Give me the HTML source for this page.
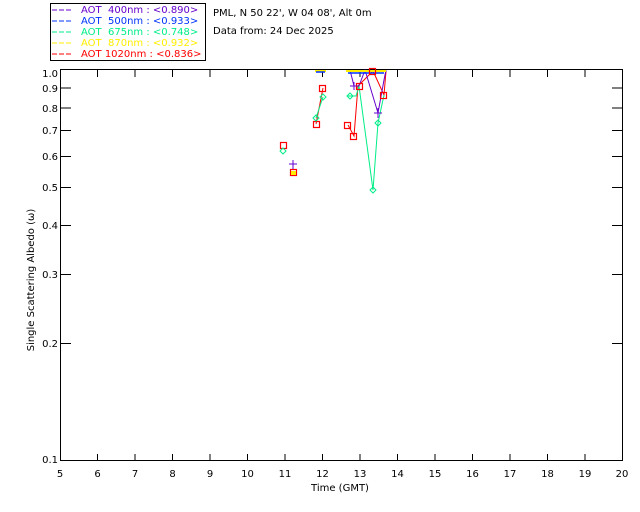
<!DOCTYPE html>
<html><head><meta charset="utf-8"><style>
html,body{margin:0;padding:0;background:#fff;width:640px;height:512px;overflow:hidden}
svg{display:block}
text{font-family:"DejaVu Sans","Liberation Sans",sans-serif;font-size:10px;white-space:pre}
</style></head><body>
<svg width="640" height="512" viewBox="0 0 640 512" xmlns="http://www.w3.org/2000/svg">
<rect x="50.5" y="3.5" width="155" height="57" fill="#fff" stroke="#000"/>
<g font-size="10">
<line x1="52" y1="10" x2="73" y2="10" stroke="#6600cc" stroke-dasharray="5,2"/>
<text x="81" y="13" fill="#6600cc" xml:space="preserve">AOT  400nm : &lt;0.890&gt;</text>
<line x1="52" y1="21" x2="73" y2="21" stroke="#0033ff" stroke-dasharray="5,2"/>
<text x="81" y="24" fill="#0033ff" xml:space="preserve">AOT  500nm : &lt;0.933&gt;</text>
<line x1="52" y1="32" x2="73" y2="32" stroke="#00ee88" stroke-dasharray="5,2"/>
<text x="81" y="35" fill="#00ee88" xml:space="preserve">AOT  675nm : &lt;0.748&gt;</text>
<line x1="52" y1="43" x2="73" y2="43" stroke="#ffee00" stroke-dasharray="5,2"/>
<text x="81" y="46" fill="#ffee00" xml:space="preserve">AOT  870nm : &lt;0.932&gt;</text>
<line x1="52" y1="54" x2="73" y2="54" stroke="#ff0000" stroke-dasharray="5,2"/>
<text x="81" y="57" fill="#ff0000" xml:space="preserve">AOT 1020nm : &lt;0.836&gt;</text>
</g>
<text x="213" y="16">PML, N 50 22', W 04 08', Alt 0m</text>
<text x="213" y="34">Data from: 24 Dec 2025</text>

<g stroke="#000" stroke-width="1" fill="none">
<rect x="60.5" y="69.5" width="562" height="391"/>
</g>
<g stroke="#000">
<line x1="97.5" y1="461" x2="97.5" y2="454"/><line x1="135" y1="461" x2="135" y2="454"/><line x1="172.5" y1="461" x2="172.5" y2="454"/><line x1="210" y1="461" x2="210" y2="454"/><line x1="247.5" y1="461" x2="247.5" y2="454"/><line x1="285" y1="461" x2="285" y2="454"/><line x1="322.5" y1="461" x2="322.5" y2="454"/><line x1="360" y1="461" x2="360" y2="454"/><line x1="397.5" y1="461" x2="397.5" y2="454"/><line x1="435" y1="461" x2="435" y2="454"/><line x1="472.5" y1="461" x2="472.5" y2="454"/><line x1="510" y1="461" x2="510" y2="454"/><line x1="547.5" y1="461" x2="547.5" y2="454"/><line x1="585" y1="461" x2="585" y2="454"/>
<line x1="97.5" y1="70" x2="97.5" y2="77"/><line x1="135" y1="70" x2="135" y2="77"/><line x1="172.5" y1="70" x2="172.5" y2="77"/><line x1="210" y1="70" x2="210" y2="77"/><line x1="247.5" y1="70" x2="247.5" y2="77"/><line x1="285" y1="70" x2="285" y2="77"/><line x1="322.5" y1="70" x2="322.5" y2="77"/><line x1="360" y1="70" x2="360" y2="77"/><line x1="397.5" y1="70" x2="397.5" y2="77"/><line x1="435" y1="70" x2="435" y2="77"/><line x1="472.5" y1="70" x2="472.5" y2="77"/><line x1="510" y1="70" x2="510" y2="77"/><line x1="547.5" y1="70" x2="547.5" y2="77"/><line x1="585" y1="70" x2="585" y2="77"/>
<line x1="60" y1="88" x2="71" y2="88"/><line x1="60" y1="108" x2="71" y2="108"/><line x1="60" y1="130.5" x2="71" y2="130.5"/><line x1="60" y1="156.5" x2="71" y2="156.5"/><line x1="60" y1="187.5" x2="71" y2="187.5"/><line x1="60" y1="225.5" x2="71" y2="225.5"/><line x1="60" y1="274.5" x2="71" y2="274.5"/><line x1="60" y1="343.5" x2="71" y2="343.5"/>
<line x1="612" y1="88" x2="622" y2="88"/><line x1="612" y1="108" x2="622" y2="108"/><line x1="612" y1="130.5" x2="622" y2="130.5"/><line x1="612" y1="156.5" x2="622" y2="156.5"/><line x1="612" y1="187.5" x2="622" y2="187.5"/><line x1="612" y1="225.5" x2="622" y2="225.5"/><line x1="612" y1="274.5" x2="622" y2="274.5"/><line x1="612" y1="343.5" x2="622" y2="343.5"/>
</g>
<g text-anchor="end">
<text x="58" y="77">1.0</text><text x="58" y="92">0.9</text><text x="58" y="112">0.8</text><text x="58" y="134">0.7</text><text x="58" y="160">0.6</text><text x="58" y="191">0.5</text><text x="58" y="229">0.4</text><text x="58" y="278">0.3</text><text x="58" y="347">0.2</text><text x="58" y="463">0.1</text>
</g>
<g text-anchor="middle">
<text x="60" y="477">5</text><text x="97.5" y="477">6</text><text x="135" y="477">7</text><text x="172.5" y="477">8</text><text x="210" y="477">9</text><text x="247.5" y="477">10</text><text x="285" y="477">11</text><text x="322.5" y="477">12</text><text x="360" y="477">13</text><text x="397.5" y="477">14</text><text x="435" y="477">15</text><text x="472.5" y="477">16</text><text x="510" y="477">17</text><text x="547.5" y="477">18</text><text x="585" y="477">19</text><text x="622" y="477">20</text>
<text x="340" y="491">Time (GMT)</text>
</g>
<text transform="translate(34,280) rotate(-90)" text-anchor="middle">Single Scattering Albedo (ω)</text>

<g fill="none">
<polyline points="316,124 323,88" stroke="#ff0000"/>
<polyline points="316,118 323,97" stroke="#00ee88"/>
<polyline points="348,125 354,136 358,86 373,71 384,95 386,71" stroke="#ff0000"/>
<polyline points="348,96 356,96 359,86 373,190 378,123 384,95" stroke="#00ee88"/>
<polyline points="350,70 354,86 359,86 365,70 378,113 384,80 386,70" stroke="#6600cc"/>
</g>
<g stroke="#ffee00" stroke-width="2"><line x1="315" y1="71" x2="326" y2="71"/><line x1="346" y1="71" x2="386" y2="71"/></g>
<g stroke="#0033ff" stroke-width="1.5"><line x1="316" y1="72" x2="325" y2="72"/><line x1="348" y1="73" x2="384" y2="73"/></g>
<g fill="none" stroke="#ff0000" stroke-width="1.2">
<rect x="280.5" y="142.5" width="6" height="6"/><rect x="290.5" y="169.5" width="6" height="6"/>
<rect x="313.5" y="121.5" width="6" height="6"/><rect x="319.5" y="85.5" width="6" height="6"/>
<rect x="344.5" y="122.5" width="6" height="6"/><rect x="350.5" y="133.5" width="6" height="6"/>
<rect x="356.5" y="83.5" width="6" height="6"/><rect x="369.5" y="68.5" width="6" height="6"/>
<rect x="380.5" y="92.5" width="6" height="6"/>
</g>
<rect x="291" y="171" width="5" height="4" fill="#ffee00"/>
<g fill="none" stroke="#00ee88">
<path d="M283,148l3,3l-3,3l-3,-3z"/><path d="M316,115l3,3l-3,3l-3,-3z"/><path d="M323,94l3,3l-3,3l-3,-3z"/>
<path d="M350,93l3,3l-3,3l-3,-3z"/><path d="M373,187l3,3l-3,3l-3,-3z"/><path d="M378,120l3,3l-3,3l-3,-3z"/>
</g>
<g stroke="#6600cc"><path d="M293,160v9M289,164h8M378,108v10M374,113h8M354,82v8M350,86h8"/></g>
</svg>
</body></html>
